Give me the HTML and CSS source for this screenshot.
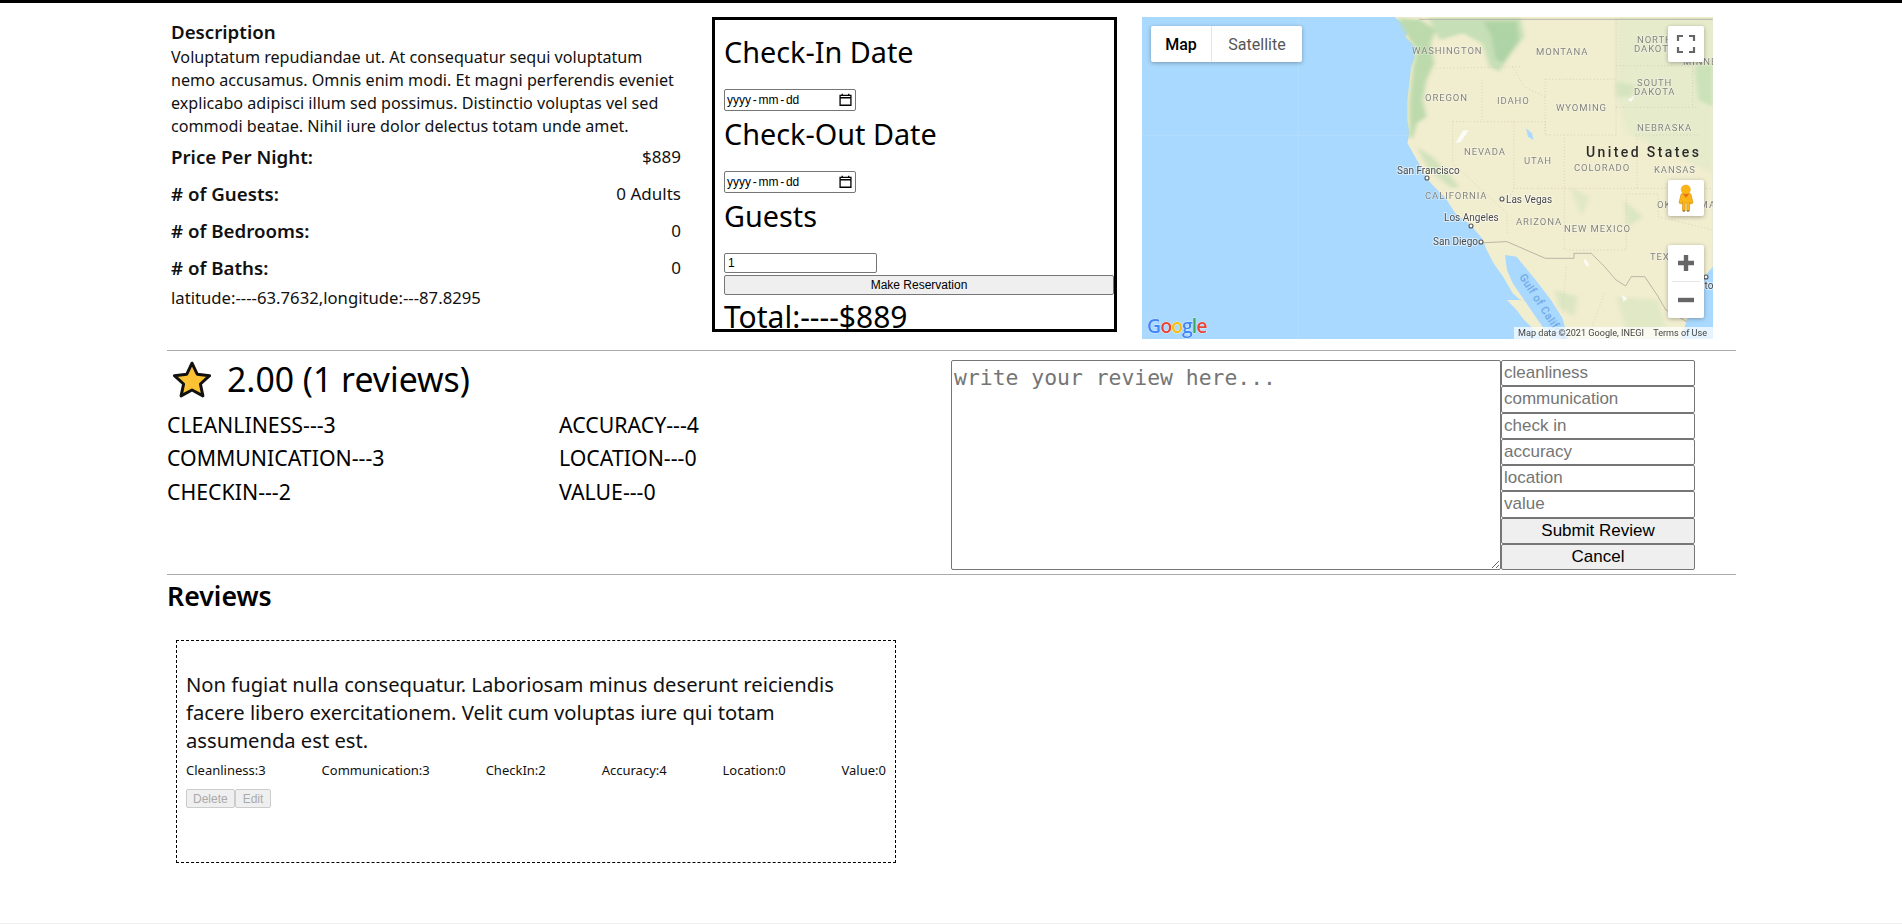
FILE: index.html
```html
<!DOCTYPE html>
<html lang="en">
<head>
<meta charset="utf-8">
<title>Listing</title>
<link rel="stylesheet" href="styles.css">
</head>
<body>
<div class="page">
  <section class="top">
    <div class="info">
      <div class="info-title">Description</div>
      <p class="info-text">Voluptatum repudiandae ut. At consequatur sequi voluptatum nemo accusamus. Omnis enim modi. Et magni perferendis eveniet explicabo adipisci illum sed possimus. Distinctio voluptas vel sed commodi beatae. Nihil iure dolor delectus totam unde amet.</p>
      <div class="info-row"><strong>Price Per Night:</strong><span>$889</span></div>
      <div class="info-row"><strong># of Guests:</strong><span>0 Adults</span></div>
      <div class="info-row"><strong># of Bedrooms:</strong><span>0</span></div>
      <div class="info-row"><strong># of Baths:</strong><span>0</span></div>
      <div class="info-geo">latitude:----63.7632,longitude:---87.8295</div>
    </div>

    <form class="booking">
      <h3 class="booking-title">Check-In Date</h3>
      <label class="booking-date">
        <input class="booking-date-text" type="text" value="yyyy - mm - dd">
        <svg class="booking-date-icon" viewBox="0 0 12 12" width="13" height="13" aria-hidden="true"><path d="M1 2.2H11V11.3H1ZM1 4.4H11" fill="none" stroke="#000" stroke-width="1.2"/><path d="M3 .6V2.2M9 .6V2.2" stroke="#000" stroke-width="1.2"/></svg>
      </label>
      <h3 class="booking-title">Check-Out Date</h3>
      <label class="booking-date">
        <input class="booking-date-text" type="text" value="yyyy - mm - dd">
        <svg class="booking-date-icon" viewBox="0 0 12 12" width="13" height="13" aria-hidden="true"><path d="M1 2.2H11V11.3H1ZM1 4.4H11" fill="none" stroke="#000" stroke-width="1.2"/><path d="M3 .6V2.2M9 .6V2.2" stroke="#000" stroke-width="1.2"/></svg>
      </label>
      <h3 class="booking-title">Guests</h3>
      <input class="booking-guests" type="number" value="1">
      <button class="booking-submit" type="button">Make Reservation</button>
      <h3 class="booking-total">Total:----$889</h3>
    </form>

    <div class="map">
      <svg class="map-canvas" viewBox="0 0 571 322" width="571" height="322" aria-hidden="true">
        <defs>
          <filter id="soft" x="-5%" y="-5%" width="110%" height="110%"><feGaussianBlur stdDeviation="5"/></filter>
          <filter id="softer" x="-5%" y="-5%" width="110%" height="110%"><feGaussianBlur stdDeviation="0.7"/></filter>
          <filter id="label" x="-5%" y="-5%" width="110%" height="110%"><feGaussianBlur stdDeviation="0.25"/></filter>
        </defs>
        <rect width="571" height="322" fill="#a9d9fe"/>
        <path d="M0 118.5H571M156 0V322" stroke="#b2ddfe" stroke-width="1" fill="none"/>
        <g transform="translate(-12,-17) scale(0.3827,0.3333)">
          <polygon fill="#f1edcf" filter="url(#softer)" points="690,50 720,75 755,60 755,95 730,92 720,110 745,140 745,170 735,200 730,250 725,300 725,360 730,400 725,430 745,470 760,500 775,535 795,560 825,595 850,640 890,675 920,715 930,745 950,790 975,830 1000,880 1020,900 985,900 1010,930 1030,960 1080,1016 1440,1016 1455,960 1480,900 1500,830 1523,800 1523,50"/>
          <g filter="url(#soft)">
            <polygon fill="#e6ebcb" points="1270,50 1523,50 1523,520 1300,400 1270,280"/>
            <polygon fill="#bddaac" points="700,55 760,60 800,90 785,130 795,190 775,240 765,300 775,350 750,370 738,415 730,415 730,300 740,200 750,150 725,110"/>
            <polygon fill="#c6dfb6" points="780,55 1020,55 1030,110 990,170 965,215 940,200 920,130 870,100 810,120"/>
            <polygon fill="#aed3a4" points="925,65 1010,65 1015,120 975,190 955,175 945,110"/>
            <polygon fill="#d2e2bb" points="750,440 790,470 840,530 860,560 840,565 780,510"/>
            <polygon fill="#cbe2b8" points="1475,200 1523,190 1523,320 1485,300"/>
            <polygon fill="#d5e4bf" points="1270,245 1320,255 1310,290 1270,290"/>
            <polygon fill="#dde6c2" points="1110,870 1170,890 1160,950 1120,920"/>
            <polygon fill="#dbe6c2" points="1290,600 1340,650 1300,680"/>
            <polygon fill="#e1e8c6" points="1270,890 1380,900 1400,980 1300,1000"/>
            <polygon fill="#e0e8c4" points="1150,560 1200,590 1180,650"/>
          </g>
          <polygon fill="#a9d9fe" filter="url(#softer)" points="980,765 1010,770 1060,840 1100,900 1130,955 1145,1016 1100,1016 1060,950 1030,900 1000,850 985,810"/>
          <polygon fill="#ffffff" opacity=".8" points="870,392 885,390 865,425 850,430"/>
          <polygon fill="#a9d9fe" points="1035,385 1050,400 1055,420 1040,410"/>
          <polygon fill="#ffffff" opacity=".75" points="1190,775 1200,795 1195,800 1185,785"/>
          <polygon fill="#ffffff" opacity=".8" points="1285,885 1300,895 1290,905"/>
          <polygon fill="#ffffff" opacity=".75" points="1300,300 1320,285 1310,305"/>
          <g fill="none" stroke="#c9c4b2" stroke-width="1.6" stroke-dasharray="3 6">
            <path d="M800 205 1020 200M1085 238H1270V405H1085V238M1270 197H1470V320M1270 322H1480M1320 405H1490M1135 405V565H1325V405M1325 565H1523"/>
            <path d="M1003 365H1085V405M1003 365V565H1135M843 365H1003M843 365V490L985 640V700M1003 565 985 610"/>
            <path d="M1135 565V750H1297V582H1380V650L1523 690M920 240V365M1085 290 1030 260 1000 200M1270 60V238"/>
            <path d="M1140 800 1130 940M1240 880 1200 1000M1020 900H1090"/>
          </g>
          <g fill="none" stroke="#aaa79b" stroke-width="2.2" filter="url(#softer)">
            <path d="M755 58H1523"/>
            <path d="M925 728 985 725 1085 775H1160V760H1205L1240 800 1270 840 1295 858 1310 830H1345L1380 890 1400 930 1455 965"/>
          </g>
        </g>
        <g class="map-labels" filter="url(#label)">
          <text class="map-state" x="270" y="36.5">WASHINGTON</text>
          <text class="map-state" x="394" y="37.5">MONTANA</text>
          <text class="map-state" x="495" y="26">NORTH</text>
          <text class="map-state" x="492" y="35">DAKOTA</text>
          <text class="map-state" x="541" y="48">MINNESOTA</text>
          <text class="map-state" x="495" y="69">SOUTH</text>
          <text class="map-state" x="492" y="78">DAKOTA</text>
          <text class="map-state" x="283" y="83.5">OREGON</text>
          <text class="map-state" x="355" y="87">IDAHO</text>
          <text class="map-state" x="414" y="94">WYOMING</text>
          <text class="map-state" x="495" y="114">NEBRASKA</text>
          <text class="map-state" x="322" y="138">NEVADA</text>
          <text class="map-state" x="382" y="147">UTAH</text>
          <text class="map-state" x="432" y="153.5">COLORADO</text>
          <text class="map-state" x="512" y="156">KANSAS</text>
          <text class="map-state" x="283" y="181.5">CALIFORNIA</text>
          <text class="map-state" x="374" y="208">ARIZONA</text>
          <text class="map-state" x="422" y="215">NEW MEXICO</text>
          <text class="map-state" x="515" y="191">OKLAHOMA</text>
          <text class="map-state" x="508" y="243">TEXAS</text>
          <text class="map-country" x="444" y="140">United States</text>
          <text class="map-city" x="255" y="156.5">San Francisco</text>
          <text class="map-city" x="364" y="185.5">Las Vegas</text>
          <text class="map-city" x="302" y="203.5">Los Angeles</text>
          <text class="map-city" x="291" y="228">San Diego</text>
          <text class="map-city" x="539" y="272">Houston</text>
          <text class="map-gulf" transform="translate(377,260) rotate(57)">Gulf of California</text>
        </g>
        <g fill="#fff" stroke="#555" stroke-width="1.1">
          <circle cx="285" cy="161" r="2"/>
          <circle cx="360" cy="182" r="2"/>
          <circle cx="329" cy="209" r="2"/>
          <circle cx="339" cy="225" r="2"/>
          <circle cx="564" cy="260" r="2"/>
        </g>
        <text class="map-google" x="5" y="316"><tspan fill="#4285f4">G</tspan><tspan fill="#ea4335">o</tspan><tspan fill="#fbbc05">o</tspan><tspan fill="#4285f4">g</tspan><tspan fill="#34a853">l</tspan><tspan fill="#ea4335">e</tspan></text>
      </svg>

      <div class="map-types">
        <span class="map-type map-type-active">Map</span>
        <span class="map-type">Satellite</span>
      </div>
      <div class="map-btn map-fullscreen">
        <svg viewBox="0 0 36 36" width="36" height="36"><path d="M10 15V10H15M21 10H26V15M26 21V26H21M15 26H10V21" fill="none" stroke="#666" stroke-width="2.2"/></svg>
      </div>
      <div class="map-btn map-pegman">
        <svg viewBox="0 0 36 36" width="36" height="36">
          <path d="M14.5 31V22L13.5 24 11 23 13 14.5C13.4 13 15 13 18 13S22.6 13 23 14.5L25 23 22.500 24 21.500 22V31H18.800V23H17.200V31Z" fill="#fdb515" stroke="#c98a0e" stroke-width=".6"/>
          <circle cx="17.8" cy="9.6" r="4.6" fill="#fdb515" stroke="#e09f10" stroke-width=".5"/>
          <path d="M15 14 18 18 21 14Z" fill="#e8701a"/>
          <path d="M15 31H17M19 31H21" stroke="#666" stroke-width="1"/>
        </svg>
      </div>
      <div class="map-zoom">
        <svg viewBox="0 0 36 36" width="36" height="36"><path d="M18 10V26M10 18H26" stroke="#666" stroke-width="4.4" fill="none"/></svg>
        <div class="map-zoom-sep"></div>
        <svg viewBox="0 0 36 36" width="36" height="36"><path d="M10 18H26" stroke="#666" stroke-width="4.4" fill="none"/></svg>
      </div>
      <div class="map-attrib"><span>Map data ©2021 Google, INEGI</span><span>Terms of Use</span></div>
    </div>
  </section>

  <hr class="rule">

  <section class="summary">
    <div class="scores">
      <div class="rating">
        <svg class="rating-star" viewBox="0 0 40 37" width="40" height="37" aria-hidden="true">
          <path d="M20 2.2 25.2 13.2 37.6 14.7 28.4 23 30.9 34.9 20 29 9.1 34.9 11.6 23 2.4 14.7 14.8 13.2Z" fill="#fcc234" stroke="#111" stroke-width="3" stroke-linejoin="round"/>
        </svg>
        <span>2.00 (1 reviews)</span>
      </div>
      <div class="score-grid">
        <div>CLEANLINESS---3</div><div>ACCURACY---4</div>
        <div>COMMUNICATION---3</div><div>LOCATION---0</div>
        <div>CHECKIN---2</div><div>VALUE---0</div>
      </div>
    </div>
    <form class="review-form">
      <textarea class="review-text" placeholder="write your review here..."></textarea>
      <div class="review-fields">
        <input class="review-input" type="text" placeholder="cleanliness">
        <input class="review-input" type="text" placeholder="communication">
        <input class="review-input" type="text" placeholder="check in">
        <input class="review-input" type="text" placeholder="accuracy">
        <input class="review-input" type="text" placeholder="location">
        <input class="review-input" type="text" placeholder="value">
        <button class="review-btn" type="button">Submit Review</button>
        <button class="review-btn" type="button">Cancel</button>
      </div>
    </form>
  </section>

  <hr class="rule">

  <section class="reviews">
    <h3 class="reviews-title">Reviews</h3>
    <article class="card">
      <p class="card-text">Non fugiat nulla consequatur. Laboriosam minus deserunt reiciendis facere libero exercitationem. Velit cum voluptas iure qui totam assumenda est est.</p>
      <div class="card-stats">
        <span>Cleanliness:3</span><span>Communication:3</span><span>CheckIn:2</span><span>Accuracy:4</span><span>Location:0</span><span>Value:0</span>
      </div>
      <div class="card-actions">
        <button class="card-btn" type="button" disabled>Delete</button><button class="card-btn" type="button" disabled>Edit</button>
      </div>
    </article>
  </section>
</div>
</body>
</html>
```
FILE: styles.css
```css
* { box-sizing: border-box; }
html, body { margin: 0; padding: 0; }
body {
  font-family: "Noto Sans", "Open Sans", sans-serif;
  color: #111;
  background: #fff;
  overflow: hidden;
}
.page {
  height: 924px;
  border-top: 3px solid #000;
  border-bottom: 1px solid #eee;
  padding-left: 167px;
  width: 1902px;
}
.top { display: flex; width: 1569px; padding-top: 14px; height: 347px; }
.info { width: 510px; margin-left: 4px; font-size: 16.15px; }
.info-title { font-size: 18.7px; font-weight: 600; line-height: 24px; margin-top: 3px; }
.info-text { margin: 1.5px 0 0; line-height: 23px; }
.info-row { display: flex; justify-content: space-between; align-items: center; height: 37px; font-size: 17px; }
.info-row strong { font-size: 18.7px; font-weight: 600; }
.info-geo { line-height: 24px; font-size: 16.7px; }

.booking {
  width: 405px;
  height: 315px;
  margin-left: 31px;
  border: 3px solid #000;
  padding: 15px 0 0 9px;
  overflow: hidden;
  flex: none;
}
.booking-title, .booking-total { font-size: 28.8px; font-weight: 400; line-height: 34px; margin: 0 0 19.5px; color: #000; }
.booking-date {
  display: flex;
  align-items: center;
  justify-content: space-between;
  width: 132px;
  height: 22px;
  margin-bottom: 6.5px;
  padding: 0 3px 0 2px;
  border: 1px solid #767676;
  border-radius: 2px;
}
.booking-date-text {
  width: 100px;
  border: 0;
  padding: 0;
  outline: 0;
  background: none;
  color: #000;
  font: 12px "Liberation Sans", sans-serif;
  word-spacing: -1.6px;
}
.booking-date-icon { flex: none; }
.booking-guests {
  display: block;
  width: 153px;
  height: 20px;
  font: 12px "Liberation Sans", sans-serif;
  padding: 1px 3px;
  border: 1px solid #767676;
  border-radius: 2px;
}
.booking-submit {
  display: block;
  width: 390px;
  height: 20px;
  margin-top: 2px;
  font: 12px "Liberation Sans", sans-serif;
  background: #efefef;
  border: 1px solid #767676;
  border-radius: 2px;
  padding: 0;
  color: #000;
}
.booking-total { margin: 5px 0 0; font-size: 30px; }

.map { position: relative; width: 571px; height: 322px; margin-left: 25px; flex: none; overflow: hidden; }
.map-canvas { display: block; }
.map-state { font: 400 9.5px Roboto, sans-serif; letter-spacing: .9px; fill: #84847e; stroke: #fff; stroke-width: 1.5px; paint-order: stroke; stroke-opacity: .35; }
.map-country { font: 500 14px Roboto, sans-serif; letter-spacing: 2.4px; fill: #2c2c2c; }
.map-city { font: 400 10px Roboto, sans-serif; fill: #4a4a4a; stroke: #fff; stroke-width: 2px; paint-order: stroke; stroke-opacity: .55; }
.map-gulf { font: 400 10.5px Roboto, sans-serif; fill: #5f96dd; letter-spacing: .6px; }
.map-google { font: 600 19.5px "Open Sans", sans-serif; letter-spacing: -1px; stroke: #fff; stroke-width: .6px; paint-order: stroke; }

.map-types {
  position: absolute; left: 9px; top: 9px;
  display: flex; height: 36px;
  background: #fff; border-radius: 2px;
  box-shadow: 0 1px 4px rgba(0,0,0,.3);
  font: 400 16px Roboto, sans-serif; color: #565656;
}
.map-type { display: flex; align-items: center; justify-content: center; width: 90px; }
.map-type-active { width: 61px; color: #000; font-weight: 500; border-right: 1px solid #e6e6e6; }
.map-btn, .map-zoom {
  position: absolute; left: 526px; width: 36px;
  background: #fff; border-radius: 2px;
  box-shadow: 0 1px 4px rgba(0,0,0,.3);
}
.map-btn svg, .map-zoom svg { display: block; }
.map-btn { height: 36px; }
.map-fullscreen { top: 9px; }
.map-pegman { top: 163px; }
.map-zoom { top: 228px; height: 73px; }
.map-zoom-sep { height: 1px; margin: 0 4px; background: #e6e6e6; }
.map-attrib {
  position: absolute; right: 0; bottom: 0;
  width: 199px; height: 12px;
  display: flex; justify-content: space-between;
  padding: 0 6px 0 4px;
  background: rgba(255,255,255,.7);
  font: 400 9.1px/12px Roboto, sans-serif; color: #444;
}

.rule { margin: 0; border: 0; height: 1px; background: #aaa; width: 1569px; }

.summary { display: flex; width: 1569px; height: 223px; }
.scores { width: 784px; }
.rating { display: flex; align-items: center; height: 44px; margin-top: 6px; font-size: 33.8px; line-height: 44px; color: #000; }
.rating-star { margin-left: 5px; margin-right: 15px; flex: none; }
.score-grid { display: grid; grid-template-columns: 392px 392px; grid-auto-rows: 33.5px; margin-top: 6.5px; font-size: 21.3px; line-height: 33.5px; color: #000; }

.review-form { display: flex; width: 743px; height: 210px; margin-top: 9px; }
.review-text {
  width: 550px; height: 210px; flex: none;
  font: 21.4px "DejaVu Sans Mono", monospace;
  padding: 4px 2px 2px;
  border: 1px solid #767676;
  border-radius: 2px;
}
.review-fields { width: 194px; display: grid; grid-auto-rows: 1fr; }
.review-input, .review-btn {
  width: 194px; min-height: 0; margin: 0;
  font: 17px "Liberation Sans", sans-serif;
  border: 1px solid #767676;
  border-radius: 2px;
  padding: 0 2px;
}
.review-btn { background: #efefef; color: #000; padding: 0; }

.reviews-title { margin: 5px 0 28px 0; font-size: 26.7px; font-weight: 600; line-height: 32px; color: #000; }
.card {
  width: 720px; height: 223px;
  margin-left: 9px;
  border: 1px dashed #000;
  padding: 29px 9px 0;
}
.card-text { margin: 0; padding-right: 10px; font-size: 20.2px; line-height: 28px; }
.card-stats { display: flex; justify-content: space-between; margin-top: 6px; font-size: 13px; line-height: 20px; }
.card-actions { display: flex; margin-top: 9px; }
.card-btn {
  height: 19px; padding: 0 6px;
  font: 12px "Liberation Sans", sans-serif;
  background: #efefef; color: #aaa;
  border: 1px solid #ccc; border-radius: 2px;
}
.card-btn + .card-btn { padding: 0 7px; }
```
